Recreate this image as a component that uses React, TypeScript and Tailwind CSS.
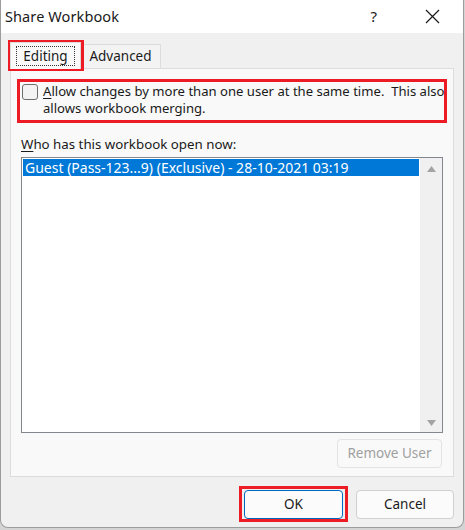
import React from "react";

const font = { fontFamily: '"Noto Sans", "Open Sans", sans-serif' };

function CloseIcon() {
  return (
    <svg width="15" height="15" viewBox="0 0 15 15" className="text-[#1a1a1a]">
      <path d="M1 1 L14 14 M14 1 L1 14" stroke="currentColor" strokeWidth="1.2" fill="none" />
    </svg>
  );
}

function ArrowUp() {
  return (
    <svg width="9" height="6" viewBox="0 0 9 6">
      <path d="M4.5 0 L9 6 L0 6 Z" fill="#a3a3a3" />
    </svg>
  );
}

function ArrowDown() {
  return (
    <svg width="9" height="6" viewBox="0 0 9 6">
      <path d="M0 0 L9 0 L4.5 6 Z" fill="#a3a3a3" />
    </svg>
  );
}

export default function App() {
  return (
    <div className="w-[465px] h-[530px] bg-[#d4d4d4] text-[#1a1a1a]" style={font}>
      <div className="relative flex h-[528px] w-[464px] flex-col overflow-hidden rounded-b-[8px] border border-t-0 border-[#9c9c9c] bg-[#f0f0f0]">
        {/* title bar */}
        <div className="flex h-[33px] items-center bg-white pl-[4px]">
          <span className="text-[14.5px] tracking-[0.1px]">Share Workbook</span>
          <span className="ml-auto mr-[48px] text-[15px]">?</span>
          <span className="mr-[23px] flex items-center">
            <CloseIcon />
          </span>
        </div>

        {/* tabs */}
        <div className="flex h-[35px] items-end px-[9px]">
          <div className="relative z-10 -mb-px flex h-[27px] w-[71px] items-center justify-center border border-b-0 border-[#dcdcdc] bg-[#f9f9f9]">
            <span className="border border-dotted border-[#333] px-[6px] text-[13.5px] leading-[18px]">Editing</span>
          </div>
          <div className="flex h-[24px] w-[80px] items-center justify-center border border-b-0 border-l-0 border-[#dcdcdc] bg-[#f3f3f3] text-[13.5px]">
            Advanced
          </div>
        </div>

        {/* panel */}
        <div className="mx-[9px] flex h-[409px] flex-col border border-[#dcdcdc] bg-[#f9f9f9] px-[10px] pt-[14px]">
          <div className="flex items-start gap-[5px] pl-[1px]">
            <div className="mt-[1px] h-[16px] w-[16px] shrink-0 rounded-[3px] border border-[#6e6e6e] bg-[#f3f3f3]" />
            <p className="whitespace-nowrap text-[13.1px] leading-[17px]">
              <span className="underline underline-offset-2">A</span>llow changes by more than one user at the same time.&nbsp; This also
              <br />
              allows workbook merging.
            </p>
          </div>

          <div className="mt-[19px] whitespace-nowrap text-[13.3px] leading-[17px]">
            <span className="underline underline-offset-2">W</span>ho has this workbook open now:
          </div>

          <div className="mt-[4px] flex h-[276px] border border-[#828790] bg-white">
            <div className="flex-1 p-px">
              <div className="h-[17px] whitespace-nowrap bg-[#0078d7] pl-[2px] text-[14px] leading-[17px] text-white">
                Guest (Pass-123...9) (Exclusive) - 28-10-2021 03:19
              </div>
            </div>
            <div className="flex w-[22px] flex-col items-center justify-between bg-[#f0f0f0] pb-[6px] pt-[8px]">
              <ArrowUp />
              <ArrowDown />
            </div>
          </div>

          <div className="mt-[6px] flex justify-end pr-[1px]">
            <div className="flex h-[29px] w-[105px] items-center justify-center rounded-[4px] border border-[#e3e3e3] bg-[#f9f9f9] text-[13.5px] text-[#a0a0a0]">
              Remove User
            </div>
          </div>
        </div>

        {/* bottom buttons */}
        <div className="mt-[13px] flex justify-end gap-[13px] pr-[9px]">
          <div className="flex h-[29px] w-[99px] items-center justify-center rounded-[4px] border border-[#0067c0] bg-[#fbfbfb] text-[13.5px]">
            OK
          </div>
          <div className="flex h-[29px] w-[98px] items-center justify-center rounded-[4px] border border-[#d0d0d0] bg-[#fbfbfb] text-[13.5px]">
            Cancel
          </div>
        </div>

        {/* annotation boxes */}
        <div className="pointer-events-none absolute left-[7px] top-[40px] h-[31px] w-[76px] border-[3px] border-[#ed1c24]" />
        <div className="pointer-events-none absolute left-[16px] top-[79px] h-[44px] w-[430px] border-[3px] border-[#ed1c24]" />
        <div className="pointer-events-none absolute left-[238px] top-[486px] h-[36px] w-[109px] border-[3px] border-[#ed1c24]" />
      </div>
    </div>
  );
}
